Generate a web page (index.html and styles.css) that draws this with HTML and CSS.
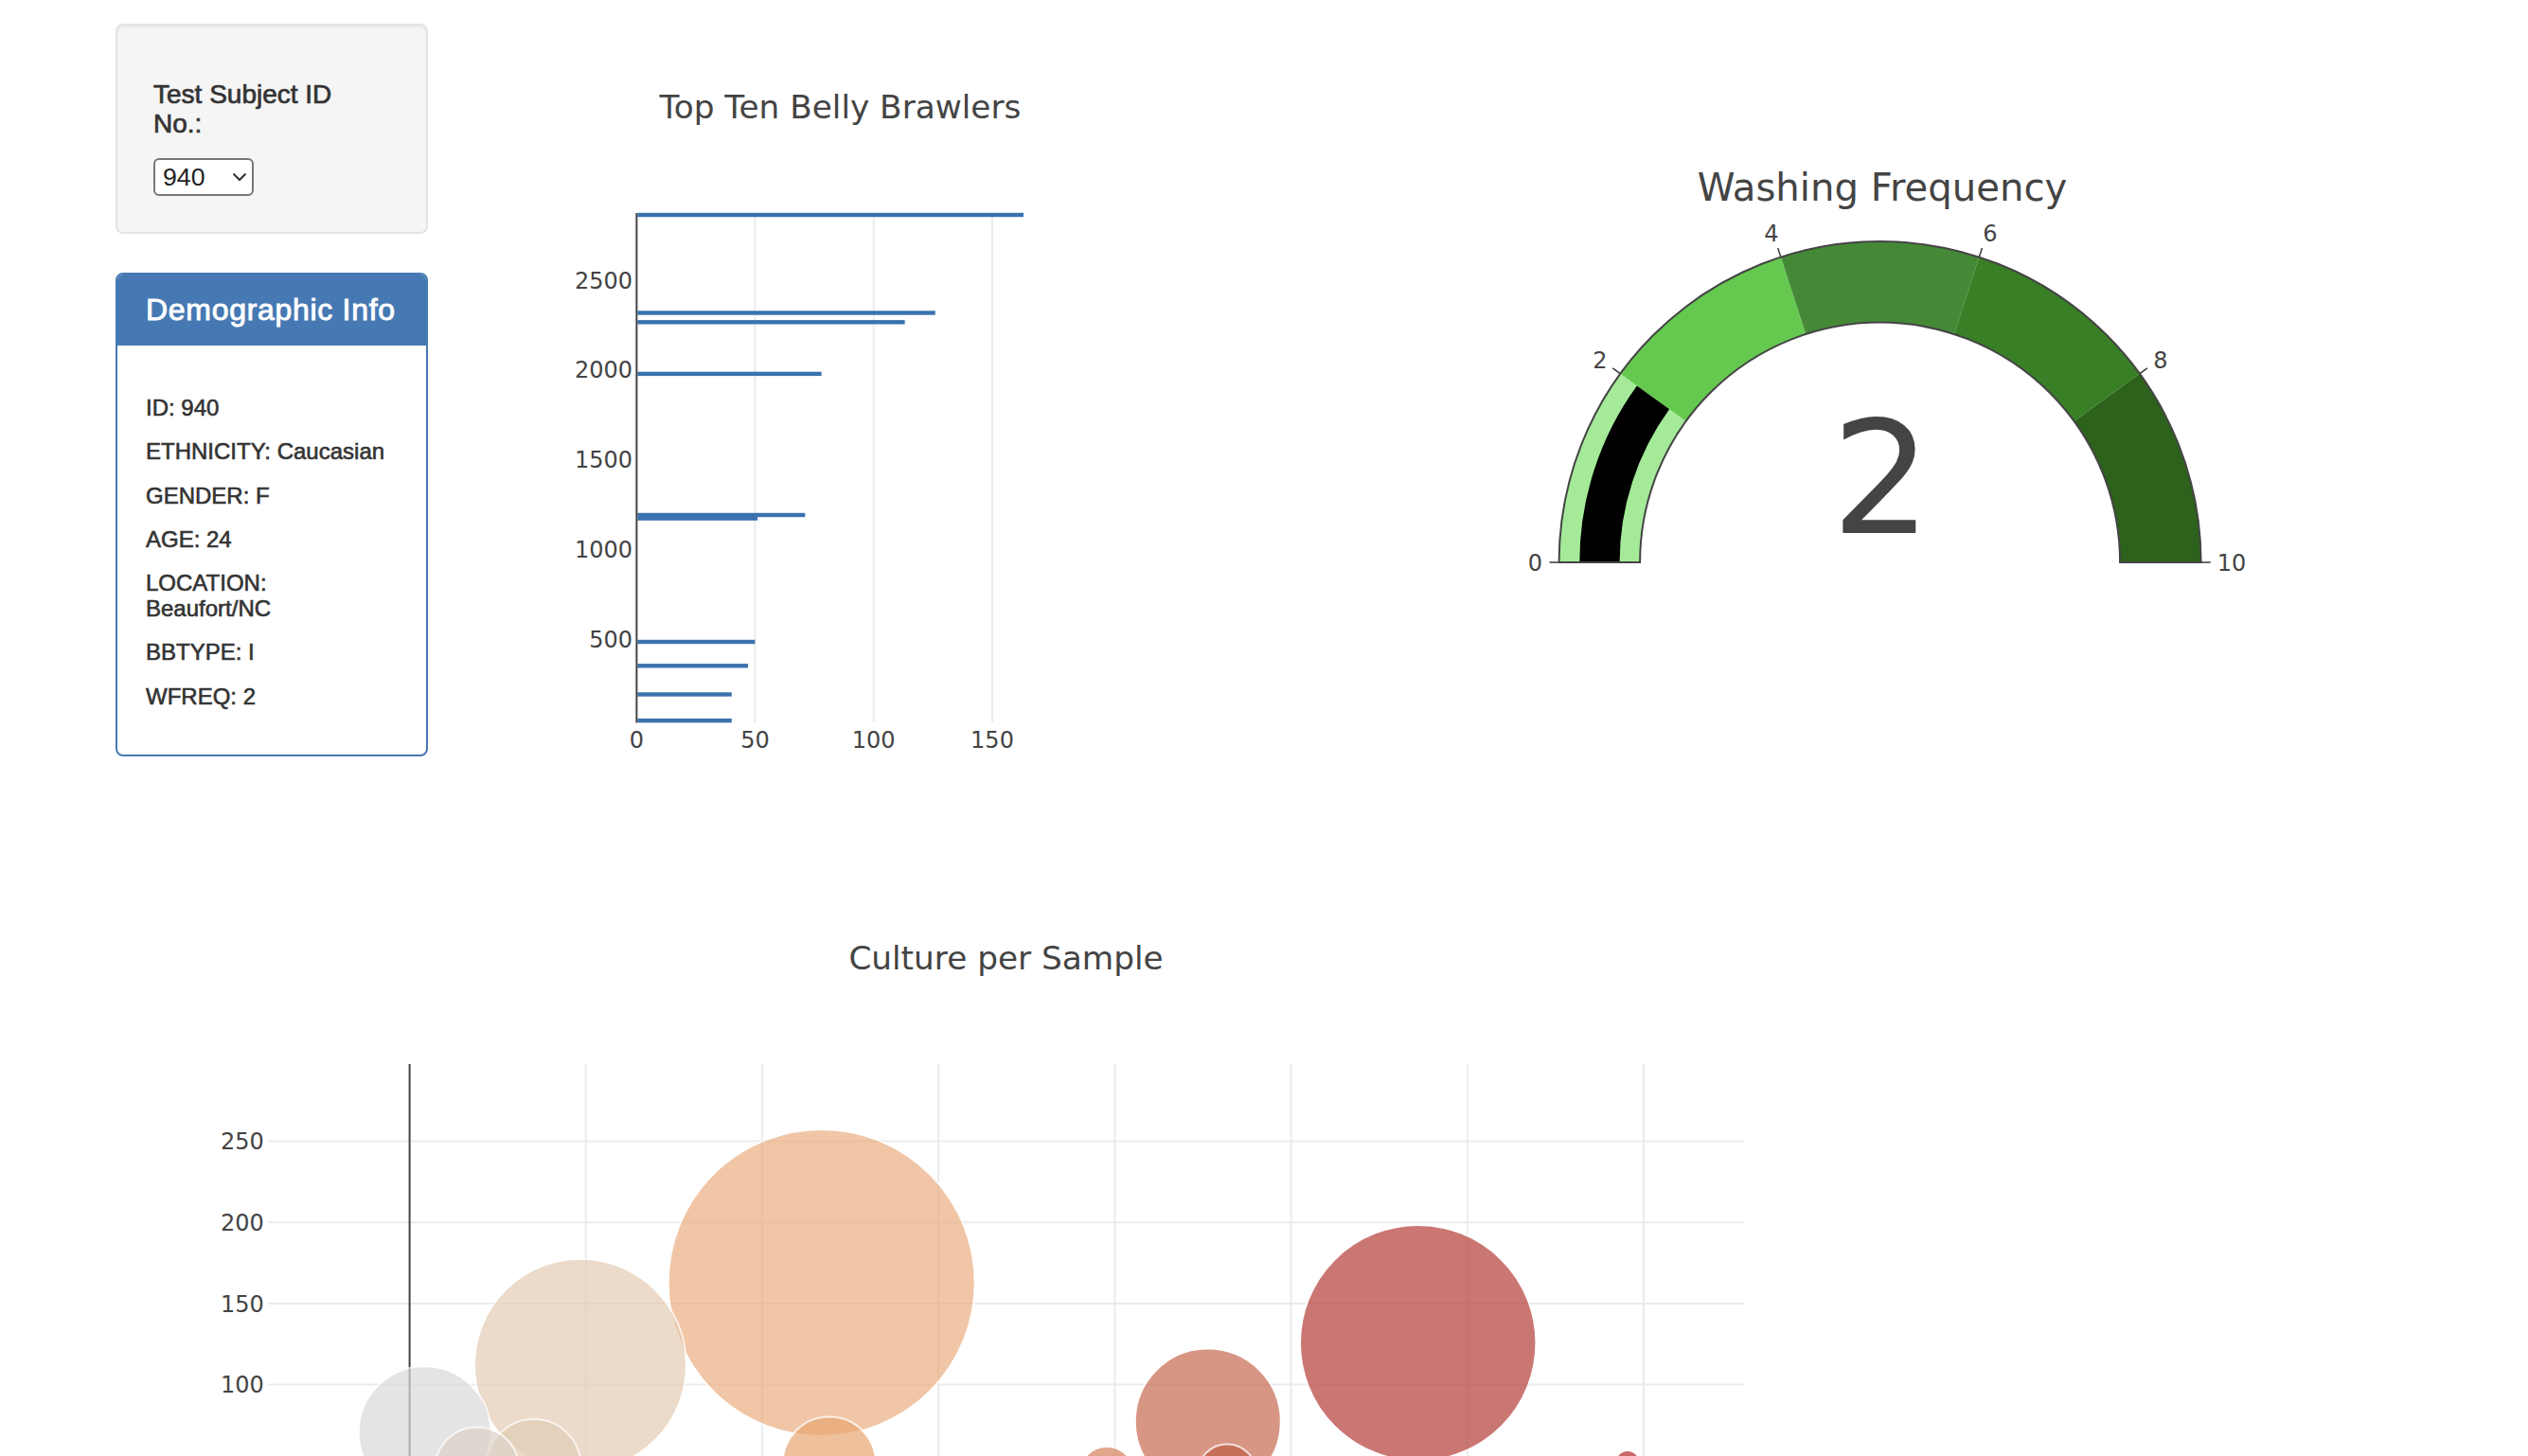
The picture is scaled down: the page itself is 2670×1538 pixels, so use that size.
FILE: index.html
```html
<!DOCTYPE html>
<html lang="en">
<head>
<meta charset="utf-8">
<title>Belly Button Biodiversity</title>
<link rel="stylesheet" href="styles.css">
</head>
<body>
<div class="page">
  <div class="top-row">
    <div class="side">
      <div class="well">
        <h5 class="select-label">Test Subject ID<br>No.:</h5>
        <div class="select-wrap">
          <select class="subject-select"><option>940</option></select>
          <svg class="chevron" width="16" height="10" viewBox="0 0 16 10"><path d="M1.5 1.5 L8 8 L14.5 1.5" fill="none" stroke="#333" stroke-width="2"/></svg>
        </div>
      </div>
      <div class="panel">
        <div class="panel-heading"><h3 class="panel-title">Demographic Info</h3></div>
        <div class="panel-body">
          <h6 class="meta">ID: 940</h6>
          <h6 class="meta">ETHNICITY: Caucasian</h6>
          <h6 class="meta">GENDER: F</h6>
          <h6 class="meta">AGE: 24</h6>
          <h6 class="meta">LOCATION: Beaufort/NC</h6>
          <h6 class="meta">BBTYPE: I</h6>
          <h6 class="meta">WFREQ: 2</h6>
        </div>
      </div>
    </div>

    <svg class="bar-chart" width="1048" height="875" viewBox="0 0 1048 875">
      <text class="chart-title" x="435.5" y="100" text-anchor="middle">Top Ten Belly Brawlers</text>
      <g class="grid">
        <line x1="345.4" y1="200" x2="345.4" y2="738"/>
        <line x1="470.7" y1="200" x2="470.7" y2="738"/>
        <line x1="596" y1="200" x2="596" y2="738"/>
      </g>
      <g class="bars">
        <rect x="221.4" y="199.8" width="407.6" height="4.4"/>
        <rect x="221.4" y="303.3" width="314.4" height="4.4"/>
        <rect x="221.4" y="313.1" width="282.2" height="4.4"/>
        <rect x="221.4" y="367.7" width="194.2" height="4.4"/>
        <rect x="221.4" y="516.8" width="176.9" height="4.4"/>
        <rect x="221.4" y="520.4" width="126.7" height="4.4"/>
        <rect x="221.4" y="650.8" width="124" height="4.4"/>
        <rect x="221.4" y="676.1" width="116.7" height="4.4"/>
        <rect x="221.4" y="706.3" width="99.4" height="4.4"/>
        <rect x="221.4" y="734" width="99.4" height="4.4"/>
      </g>
      <line class="axis" x1="220.4" y1="200" x2="220.4" y2="738.4"/>
      <g class="tick-label" text-anchor="end">
        <text x="216" y="279.6">2500</text>
        <text x="216" y="374.3">2000</text>
        <text x="216" y="468.6">1500</text>
        <text x="216" y="564">1000</text>
        <text x="216" y="659.3">500</text>
      </g>
      <g class="tick-label" text-anchor="middle">
        <text x="220.4" y="765">0</text>
        <text x="345.4" y="765">50</text>
        <text x="470.7" y="765">100</text>
        <text x="596" y="765">150</text>
      </g>
    </svg>

    <svg class="gauge-chart" width="971" height="875" viewBox="0 0 971 875">
      <text class="gauge-title" x="488" y="187" text-anchor="middle">Washing Frequency</text>
      <path d="M146.6,569 A339,339 0 0 1 211.34,369.74 L280.51,419.99 A253.5,253.5 0 0 0 232.1,569 Z" fill="#a4ea99"/>
      <path d="M211.34,369.74 A339,339 0 0 1 380.84,246.59 L407.26,327.91 A253.5,253.5 0 0 0 280.51,419.99 Z" fill="#66c94f"/>
      <path d="M380.84,246.59 A339,339 0 0 1 590.36,246.59 L563.94,327.91 A253.5,253.5 0 0 0 407.26,327.91 Z" fill="#458937"/>
      <path d="M590.36,246.59 A339,339 0 0 1 759.86,369.74 L690.69,419.99 A253.5,253.5 0 0 0 563.94,327.91 Z" fill="#387f25"/>
      <path d="M759.86,369.74 A339,339 0 0 1 824.6,569 L739.1,569 A253.5,253.5 0 0 0 690.69,419.99 Z" fill="#2c621b"/>
      <path d="M168.3,569 A317.3,317.3 0 0 1 228.9,382.5 L263.12,407.36 A275,275 0 0 0 210.6,569 Z" fill="#000"/>
      <path class="gauge-border" d="M146.6,569 A339,339 0 0 1 824.6,569 L739.1,569 A253.5,253.5 0 0 0 232.1,569 Z"/>
      <g class="gauge-ticks">
        <line x1="146.6" y1="569" x2="136.6" y2="569"/>
        <line x1="211.34" y1="369.74" x2="203.25" y2="363.86"/>
        <line x1="380.84" y1="246.59" x2="377.75" y2="237.08"/>
        <line x1="590.36" y1="246.59" x2="593.45" y2="237.08"/>
        <line x1="759.86" y1="369.74" x2="767.95" y2="363.86"/>
        <line x1="824.6" y1="569" x2="834.6" y2="569"/>
      </g>
      <g class="tick-label" text-anchor="middle">
        <text x="121.5" y="577.7">0</text>
        <text x="190" y="363.5">2</text>
        <text x="371" y="229.7">4</text>
        <text x="602" y="229.7">6</text>
        <text x="782" y="363.5">8</text>
        <text x="857" y="577.7">10</text>
      </g>
      <text class="gauge-number" x="487" y="538.4" text-anchor="middle">2</text>
    </svg>
  </div>

  <svg class="bubble-chart" width="1800" height="638" viewBox="0 0 1800 638">
    <text class="chart-title" x="940.5" y="124" text-anchor="middle">Culture per Sample</text>
    <g class="grid">
      <line x1="496.8" y1="224" x2="496.8" y2="638"/>
      <line x1="683" y1="224" x2="683" y2="638"/>
      <line x1="869.2" y1="224" x2="869.2" y2="638"/>
      <line x1="1055.4" y1="224" x2="1055.4" y2="638"/>
      <line x1="1241.6" y1="224" x2="1241.6" y2="638"/>
      <line x1="1427.8" y1="224" x2="1427.8" y2="638"/>
      <line x1="1614" y1="224" x2="1614" y2="638"/>
      <line x1="161" y1="305.6" x2="1720" y2="305.6"/>
      <line x1="161" y1="391.2" x2="1720" y2="391.2"/>
      <line x1="161" y1="476.9" x2="1720" y2="476.9"/>
      <line x1="161" y1="562.5" x2="1720" y2="562.5"/>
    </g>
    <line class="axis" x1="310.6" y1="224" x2="310.6" y2="638"/>
    <g class="tick-label" text-anchor="end">
      <text x="156.7" y="314.3">250</text>
      <text x="156.7" y="399.9">200</text>
      <text x="156.7" y="485.6">150</text>
      <text x="156.7" y="571.2">100</text>
    </g>
    <g class="bubbles">
      <circle cx="1375.7" cy="518.6" r="124.7" fill="#b53e38"/>
      <circle cx="1153.8" cy="601.5" r="77" fill="#c76951"/>
      <circle cx="745.7" cy="455" r="162" fill="#eaae81"/>
      <circle cx="491" cy="541.8" r="112" fill="#e4cdb6"/>
      <circle cx="326.6" cy="613.2" r="69.9" fill="#dadada"/>
      <circle cx="441.8" cy="648.8" r="49.8" fill="#e2cdb5"/>
      <circle cx="381.8" cy="652" r="44.6" fill="#dcd2c8"/>
      <circle cx="753.9" cy="646" r="49.4" fill="#e8a873"/>
      <circle cx="1047" cy="657" r="29" fill="#d37f5b"/>
      <circle cx="1174" cy="656.5" r="31" fill="#c16048"/>
      <circle cx="1597" cy="645" r="13" fill="#b02a2a"/>
    </g>
  </svg>
</div>
</body>
</html>
```

FILE: styles.css
```css
html, body {
  margin: 0;
  padding: 0;
  background: #ffffff;
}

body {
  height: 1538px;
  overflow: hidden;
  font-family: "Liberation Sans", Arial, Helvetica, sans-serif;
  color: #333333;
}

.page {
  padding: 25px 0 0 122px;
}

.top-row {
  display: flex;
  align-items: flex-start;
}

.side {
  width: 330px;
  flex: 0 0 330px;
}

/* selector well */
.well {
  box-sizing: border-box;
  background: #f5f5f5;
  border: 2px solid #e3e3e3;
  border-radius: 8px;
  padding: 38px;
  margin-bottom: 41px;
  box-shadow: inset 0 2px 2px rgba(0, 0, 0, 0.05);
}

.select-label {
  margin: 20px 0 20px 0;
  font-size: 28px;
  line-height: 30.8px;
  font-weight: 400;
  -webkit-text-stroke: 0.7px #333333;
  color: #333333;
}

.select-wrap {
  position: relative;
  width: 106px;
  height: 40px;
}

.subject-select {
  -webkit-appearance: none;
  appearance: none;
  box-sizing: border-box;
  width: 106px;
  height: 40px;
  margin: 0;
  padding: 0 0 0 8px;
  border: 2px solid #767676;
  border-radius: 6px;
  background: #ffffff;
  font-family: "Liberation Sans", Arial, sans-serif;
  font-size: 26.7px;
  color: #222222;
  outline: none;
}

.chevron {
  position: absolute;
  left: 83px;
  top: 15px;
  pointer-events: none;
}

/* demographic panel */
.panel {
  border: 2px solid #4679b3;
  border-radius: 8px;
  background: #ffffff;
  overflow: hidden;
}

.panel-heading {
  background: #4679b3;
  color: #ffffff;
  padding: 20px 30px;
}

.panel-title {
  margin: 0;
  font-size: 32px;
  line-height: 35.2px;
  font-weight: 400;
  letter-spacing: 0.7px;
  -webkit-text-stroke: 0.9px #ffffff;
}

.panel-body {
  padding: 33px 30px 28px 30px;
}

.meta {
  margin: 20px 0;
  font-size: 24px;
  line-height: 26.4px;
  font-weight: 400;
  color: #333333;
  -webkit-text-stroke: 0.6px #333333;
}

/* charts */
.bar-chart,
.gauge-chart,
.bubble-chart {
  display: block;
  flex: 0 0 auto;
  font-family: "DejaVu Sans", Verdana, sans-serif;
}

.chart-title {
  font-size: 34.3px;
  fill: #444444;
}

.gauge-title {
  font-size: 40.2px;
  fill: #444444;
}

.gauge-number {
  font-size: 166px;
  fill: #444444;
}

.tick-label {
  font-size: 24px;
  fill: #444444;
}

.grid line {
  stroke: #ebebeb;
  stroke-width: 2;
}

.axis {
  stroke: #444444;
  stroke-width: 2;
}

.bars rect {
  fill: #3a72ae;
}

.gauge-border {
  fill: none;
  stroke: #444444;
  stroke-width: 2;
}

.gauge-ticks line {
  stroke: #444444;
  stroke-width: 1.6;
}

.bubbles circle {
  opacity: 0.7;
  stroke: #ffffff;
  stroke-width: 2;
}
```
